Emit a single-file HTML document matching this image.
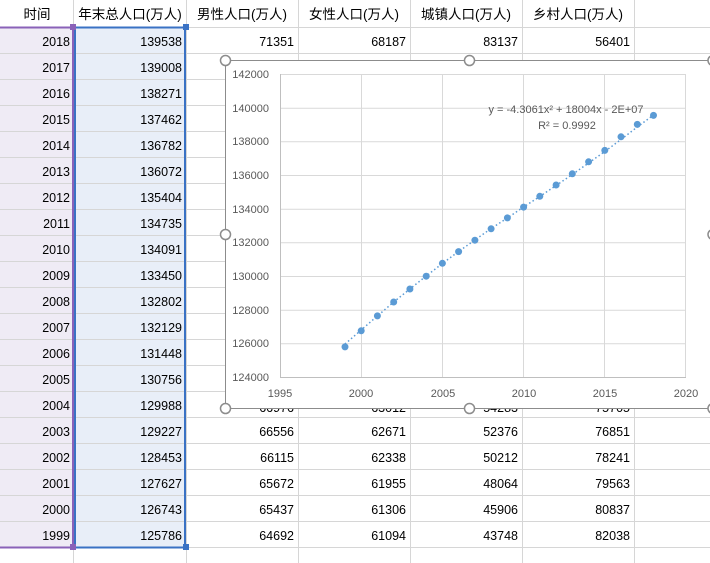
<!DOCTYPE html>
<html><head><meta charset="utf-8"><style>
html,body{margin:0;padding:0;background:#fff;width:710px;height:563px;overflow:hidden}
svg{display:block}
.h{font-family:"Liberation Sans","Noto Sans CJK SC",sans-serif;font-size:13.5px;fill:#000}
.n{font-family:"Liberation Sans",sans-serif;font-size:12.5px;fill:#000}
.a{font-family:"Liberation Sans",sans-serif;font-size:11px;fill:#595959}
</style></head><body>
<svg width="710" height="563" viewBox="0 0 710 563" xmlns="http://www.w3.org/2000/svg">
<rect x="0" y="28" width="73" height="520" fill="#efebf5"/>
<rect x="74" y="28" width="112" height="520" fill="#e8eef8"/>
<g stroke="#d6d6d6" stroke-width="1">
<line x1="73.5" y1="0" x2="73.5" y2="563"/><line x1="186.5" y1="0" x2="186.5" y2="563"/>
<line x1="298.5" y1="0" x2="298.5" y2="563"/><line x1="410.5" y1="0" x2="410.5" y2="563"/>
<line x1="522.5" y1="0" x2="522.5" y2="563"/><line x1="634.5" y1="0" x2="634.5" y2="563"/>
<line x1="0" y1="27.5" x2="710" y2="27.5"/>
<line x1="0" y1="53.5" x2="710" y2="53.5"/><line x1="0" y1="79.5" x2="710" y2="79.5"/>
<line x1="0" y1="105.5" x2="710" y2="105.5"/><line x1="0" y1="131.5" x2="710" y2="131.5"/>
<line x1="0" y1="157.5" x2="710" y2="157.5"/><line x1="0" y1="183.5" x2="710" y2="183.5"/>
<line x1="0" y1="209.5" x2="710" y2="209.5"/><line x1="0" y1="235.5" x2="710" y2="235.5"/>
<line x1="0" y1="261.5" x2="710" y2="261.5"/><line x1="0" y1="287.5" x2="710" y2="287.5"/>
<line x1="0" y1="313.5" x2="710" y2="313.5"/><line x1="0" y1="339.5" x2="710" y2="339.5"/>
<line x1="0" y1="365.5" x2="710" y2="365.5"/><line x1="0" y1="391.5" x2="710" y2="391.5"/>
<line x1="0" y1="417.5" x2="710" y2="417.5"/><line x1="0" y1="443.5" x2="710" y2="443.5"/>
<line x1="0" y1="469.5" x2="710" y2="469.5"/><line x1="0" y1="495.5" x2="710" y2="495.5"/>
<line x1="0" y1="521.5" x2="710" y2="521.5"/><line x1="0" y1="547.5" x2="710" y2="547.5"/>
</g>
<g class="h" text-anchor="middle">
<text x="37" y="19">时间</text><text x="130" y="19">年末总人口(万人)</text>
<text x="242" y="19">男性人口(万人)</text><text x="354" y="19">女性人口(万人)</text>
<text x="466" y="19">城镇人口(万人)</text><text x="578" y="19">乡村人口(万人)</text>
</g>
<g class="n" text-anchor="end">
<text x="70" y="46">2018</text><text x="70" y="72">2017</text><text x="70" y="98">2016</text><text x="70" y="124">2015</text>
<text x="70" y="150">2014</text><text x="70" y="176">2013</text><text x="70" y="202">2012</text><text x="70" y="228">2011</text>
<text x="70" y="254">2010</text><text x="70" y="280">2009</text><text x="70" y="306">2008</text><text x="70" y="332">2007</text>
<text x="70" y="358">2006</text><text x="70" y="384">2005</text><text x="70" y="410">2004</text><text x="70" y="436">2003</text>
<text x="70" y="462">2002</text><text x="70" y="488">2001</text><text x="70" y="514">2000</text><text x="70" y="540">1999</text>
<text x="182" y="46">139538</text><text x="182" y="72">139008</text><text x="182" y="98">138271</text><text x="182" y="124">137462</text>
<text x="182" y="150">136782</text><text x="182" y="176">136072</text><text x="182" y="202">135404</text><text x="182" y="228">134735</text>
<text x="182" y="254">134091</text><text x="182" y="280">133450</text><text x="182" y="306">132802</text><text x="182" y="332">132129</text>
<text x="182" y="358">131448</text><text x="182" y="384">130756</text><text x="182" y="410">129988</text><text x="182" y="436">129227</text>
<text x="182" y="462">128453</text><text x="182" y="488">127627</text><text x="182" y="514">126743</text><text x="182" y="540">125786</text>
<text x="294" y="46">71351</text><text x="406" y="46">68187</text><text x="518" y="46">83137</text><text x="630" y="46">56401</text>
<text x="294" y="412">66976</text><text x="406" y="412">63012</text><text x="518" y="412">54283</text><text x="630" y="412">75705</text>
<text x="294" y="436">66556</text><text x="406" y="436">62671</text><text x="518" y="436">52376</text><text x="630" y="436">76851</text>
<text x="294" y="462">66115</text><text x="406" y="462">62338</text><text x="518" y="462">50212</text><text x="630" y="462">78241</text>
<text x="294" y="488">65672</text><text x="406" y="488">61955</text><text x="518" y="488">48064</text><text x="630" y="488">79563</text>
<text x="294" y="514">65437</text><text x="406" y="514">61306</text><text x="518" y="514">45906</text><text x="630" y="514">80837</text>
<text x="294" y="540">64692</text><text x="406" y="540">61094</text><text x="518" y="540">43748</text><text x="630" y="540">82038</text>
</g>
<g fill="none">
<path d="M0 27.5 H73 M73 27 V548 M0 547.5 H73" stroke="#8a62b8" stroke-width="2"/>
<rect x="75" y="27.5" width="110" height="520" stroke="#3a72c4" stroke-width="2"/>
</g>
<rect x="70" y="24" width="6" height="6" fill="#8a62b8"/>
<rect x="70" y="544" width="6" height="6" fill="#8a62b8"/>
<rect x="183" y="24" width="6" height="6" fill="#3a72c4"/>
<rect x="183" y="544" width="6" height="6" fill="#3a72c4"/>
<rect x="225.5" y="60.5" width="490" height="348" fill="#fff" stroke="#8c8c8c" stroke-width="1"/>
<g stroke="#d9d9d9" stroke-width="1">
<line x1="280" y1="74.5" x2="686" y2="74.5"/><line x1="280" y1="108.2" x2="686" y2="108.2"/>
<line x1="280" y1="141.8" x2="686" y2="141.8"/><line x1="280" y1="175.5" x2="686" y2="175.5"/>
<line x1="280" y1="209.2" x2="686" y2="209.2"/><line x1="280" y1="242.8" x2="686" y2="242.8"/>
<line x1="280" y1="276.5" x2="686" y2="276.5"/><line x1="280" y1="310.2" x2="686" y2="310.2"/>
<line x1="280" y1="343.8" x2="686" y2="343.8"/><line x1="280" y1="377.5" x2="686" y2="377.5"/>
<line x1="280.5" y1="74" x2="280.5" y2="377"/><line x1="361.5" y1="74" x2="361.5" y2="377"/>
<line x1="442.5" y1="74" x2="442.5" y2="377"/><line x1="523.5" y1="74" x2="523.5" y2="377"/>
<line x1="604.5" y1="74" x2="604.5" y2="377"/><line x1="685.5" y1="74" x2="685.5" y2="377"/>
</g>
<line x1="280.5" y1="74" x2="280.5" y2="378" stroke="#bfbfbf"/>
<line x1="280" y1="377.5" x2="686" y2="377.5" stroke="#bfbfbf"/>
<g class="a" text-anchor="end">
<text x="269" y="78">142000</text><text x="269" y="112">140000</text><text x="269" y="145">138000</text>
<text x="269" y="179">136000</text><text x="269" y="213">134000</text><text x="269" y="246">132000</text>
<text x="269" y="280">130000</text><text x="269" y="314">128000</text><text x="269" y="347">126000</text><text x="269" y="381">124000</text>
</g>
<g class="a" text-anchor="middle">
<text x="280" y="397">1995</text><text x="361" y="397">2000</text><text x="443" y="397">2005</text>
<text x="524" y="397">2010</text><text x="605" y="397">2015</text><text x="686" y="397">2020</text>
</g>
<text class="a" x="566" y="113" text-anchor="middle">y = -4.3061x² + 18004x - 2E+07</text>
<text class="a" x="567" y="129" text-anchor="middle">R² = 0.9992</text>
<polyline fill="none" stroke="#5b9bd5" stroke-width="1.5" stroke-dasharray="1.5,2.5" points="345,344 361.2,330 377.4,316 393.7,302 409.9,289 426.2,276 442.4,263.5 458.6,251.5 474.9,240 491.1,228.5 507.4,218 523.6,207 539.8,196.5 556.1,185.5 572.3,174.5 588.6,163 604.8,151.5 621,139.5 637.3,127 653.5,115"/>
<g fill="#5b9bd5">
<circle cx="653.5" cy="115.4" r="3.5"/><circle cx="637.3" cy="124.4" r="3.5"/><circle cx="621" cy="136.8" r="3.5"/>
<circle cx="604.8" cy="150.4" r="3.5"/><circle cx="588.6" cy="161.8" r="3.5"/><circle cx="572.3" cy="173.8" r="3.5"/>
<circle cx="556.1" cy="185" r="3.5"/><circle cx="539.8" cy="196.3" r="3.5"/><circle cx="523.6" cy="207.1" r="3.5"/>
<circle cx="507.4" cy="217.9" r="3.5"/><circle cx="491.1" cy="228.8" r="3.5"/><circle cx="474.9" cy="240.2" r="3.5"/>
<circle cx="458.6" cy="251.6" r="3.5"/><circle cx="442.4" cy="263.3" r="3.5"/><circle cx="426.2" cy="276.2" r="3.5"/>
<circle cx="409.9" cy="289" r="3.5"/><circle cx="393.7" cy="302" r="3.5"/><circle cx="377.4" cy="315.9" r="3.5"/>
<circle cx="361.2" cy="330.8" r="3.5"/><circle cx="345" cy="346.9" r="3.5"/>
</g>
<g fill="#fff" stroke="#8c8c8c" stroke-width="1.5">
<circle cx="225.5" cy="60.5" r="5"/><circle cx="469.5" cy="60.5" r="5"/><circle cx="713" cy="60.5" r="5"/>
<circle cx="225.5" cy="234.5" r="5"/><circle cx="713" cy="234.5" r="5"/>
<circle cx="225.5" cy="408.5" r="5"/><circle cx="469.5" cy="408.5" r="5"/><circle cx="713" cy="408.5" r="5"/>
</g>
</svg>
</body></html>
